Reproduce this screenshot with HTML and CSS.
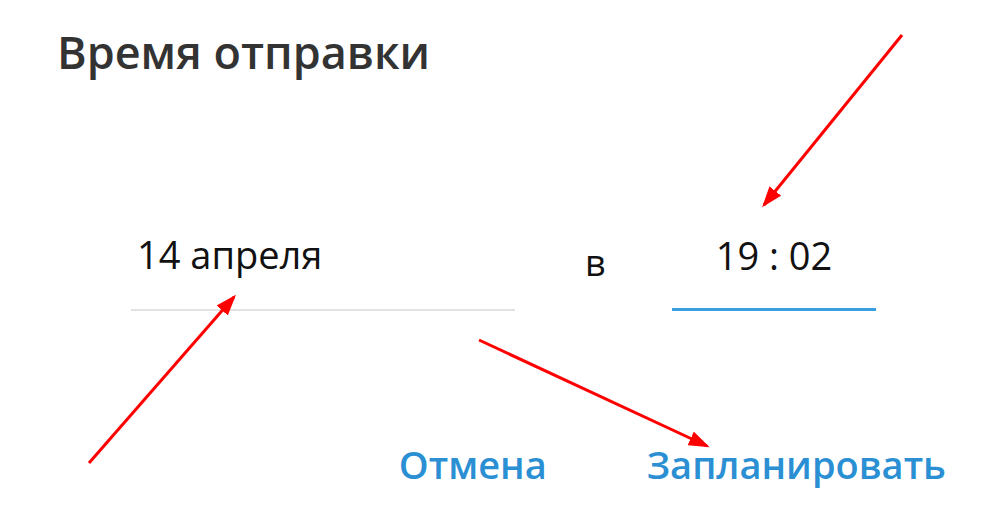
FILE: index.html
```html
<!DOCTYPE html>
<html lang="ru">
<head>
<meta charset="utf-8">
<link rel="stylesheet" href="styles.css">
</head>
<body>
<div class="box">
  <h1 class="title">Время отправки</h1>
  <div class="fields">
    <div class="field date">14 апреля</div>
    <div class="sep">в</div>
    <div class="field time">19 : 02</div>
  </div>
  <div class="actions">
    <span class="btn">Отмена</span>
    <span class="btn">Запланировать</span>
  </div>
</div>
<svg class="arrows" width="1000" height="526" viewBox="0 0 1000 526">
  <defs>
    <marker id="ah" markerWidth="7" markerHeight="5" refX="6" refY="2.5" orient="auto" markerUnits="strokeWidth">
      <path d="M0,0 L7,2.5 L0,5 Z" fill="#ff0000"/>
    </marker>
  </defs>
  <line x1="902" y1="35" x2="764" y2="205" stroke="#ff0000" stroke-width="3" marker-end="url(#ah)"/>
  <line x1="89" y1="463" x2="234" y2="297" stroke="#ff0000" stroke-width="3" marker-end="url(#ah)"/>
  <line x1="479" y1="340" x2="707" y2="446" stroke="#ff0000" stroke-width="3" marker-end="url(#ah)"/>
</svg>
</body>
</html>
```
FILE: styles.css
```css
html, body {
  margin: 0;
  padding: 0;
  background: #ffffff;
}
body {
  width: 1000px;
  height: 526px;
  overflow: hidden;
  position: relative;
  font-family: "Open Sans", "Noto Sans", sans-serif;
}
.box {
  display: flex;
  flex-direction: column;
  padding: 24px 0 0 57px;
}
.title {
  margin: 0;
  font-size: 45px;
  font-weight: 600;
  color: #333333;
  line-height: 56px;
}
.fields {
  display: flex;
  align-items: flex-end;
  margin-top: 148px;
  margin-left: 74px;
}
.field {
  font-size: 38px;
  line-height: 52px;
  color: #111111;
}
.date {
  width: 378px;
  padding-left: 6px;
  padding-bottom: 29px;
  border-bottom: 2px solid #e2e2e2;
}
.sep {
  font-size: 36px;
  line-height: 52px;
  color: #111111;
  margin-left: 70px;
  width: 87px;
  padding-bottom: 22px;
}
.time {
  width: 204px;
  text-align: center;
  border-bottom: 3px solid #3a9ee0;
  padding-bottom: 27px;
}
.actions {
  display: flex;
  justify-content: flex-end;
  gap: 100px;
  margin-top: 127px;
  padding-right: 54px;
}
.btn {
  font-size: 38px;
  font-weight: 600;
  color: #2b8fd3;
  line-height: 52px;
}
.arrows {
  position: absolute;
  left: 0;
  top: 0;
  pointer-events: none;
}
```
